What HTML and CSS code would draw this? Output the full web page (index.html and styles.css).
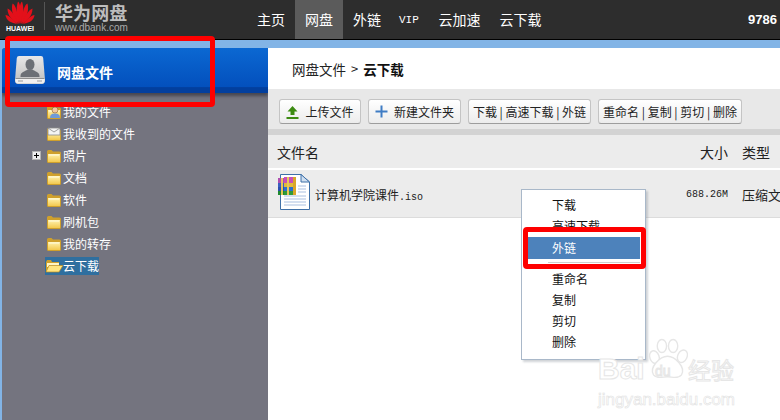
FILE: index.html
```html
<!DOCTYPE html>
<html lang="zh-CN">
<head>
<meta charset="utf-8">
<title>华为网盘</title>
<link rel="stylesheet" href="styles.css">
</head>
<body>
<svg class="defs" width="0" height="0">
  <defs>
    <linearGradient id="fg" x1="0" y1="0" x2="0" y2="1">
      <stop offset="0" stop-color="#fff3b0"/>
      <stop offset="1" stop-color="#f3c94e"/>
    </linearGradient>
    <g id="fld">
      <path d="M1 2.500Q1 1 2.500 1H5.500L7 2.500H13.500Q15 2.500 15 4V12.500Q15 14 13.500 14H2.500Q1 14 1 12.500Z" fill="#cfa02c"/>
      <path d="M2 5H14V13H2Z" fill="url(#fg)"/>
      <path d="M3 6H13" stroke="#fffbe0"/>
    </g>
  </defs>
</svg>
<div class="page">
  <header class="top">
    <div class="logo">
      <svg class="flower" width="30" height="23" viewBox="0 0 30 23">
        <g fill="#e3101a">
          <path d="M14.500 23C11 16 11 6 13 0.500C15.500 2 16.500 11 14.500 23Z"/>
          <path d="M15.500 23C19 16 19 6 17 0.500C14.500 2 13.500 11 15.500 23Z"/>
          <path d="M14 23C9 18 5.500 10 7.500 2.500C10.500 3.500 13 12 14 23Z"/>
          <path d="M16 23C21 18 24.500 10 22.500 2.500C19.500 3.500 17 12 16 23Z"/>
          <path d="M13 23C8 20 2.500 15 2.500 7.500C6 8.500 11 16 13 23Z"/>
          <path d="M17 23C22 20 27.500 15 27.500 7.500C24 8.500 19 16 17 23Z"/>
          <path d="M12 23C7 22 1 20 0.500 14C4 14.500 9 19 12 23Z"/>
          <path d="M18 23C23 22 29 20 29.500 14C26 14.500 21 19 18 23Z"/>
        </g>
      </svg>
      <span class="logo-word">HUAWEI</span>
    </div>
    <div class="logo-sep"></div>
    <div class="brand">
      <div class="brand-cn">华为网盘</div>
      <div class="brand-en">www.dbank.com</div>
    </div>
    <nav class="nav">
      <a class="nav-item">主页</a>
      <a class="nav-item is-active">网盘</a>
      <a class="nav-item">外链</a>
      <a class="nav-item nav-vip">VIP</a>
      <a class="nav-item nav-wide">云加速</a>
      <a class="nav-item nav-wide">云下载</a>
    </nav>
    <div class="user">9786</div>
  </header>

  <div class="app">
    <aside class="side">
      <div class="side-head">
        <svg class="disk" width="32" height="30" viewBox="0 0 32 30">
          <defs>
            <linearGradient id="disk" x1="0" y1="0" x2="0" y2="1">
              <stop offset="0" stop-color="#e8e8e8"/>
              <stop offset="1" stop-color="#bcbcbc"/>
            </linearGradient>
          </defs>
          <path d="M5 1H27Q29 1 29.200 3L31 25Q31 29 28 29H4Q1 29 1 25L2.800 3Q3 1 5 1Z" fill="url(#disk)"/>
          <path d="M1.300 23.500H30.700V25.500Q30.700 28.500 28 28.500H4Q1.300 28.500 1.300 25.500Z" fill="#f0f0f0"/>
          <path d="M1.500 23.500H30.500" stroke="#8f8f8f"/>
          <ellipse cx="16" cy="9.500" rx="4.500" ry="5.500" fill="#6c7076"/>
          <path d="M6.500 21C6.500 17 11 16.500 13.500 14.500H18.500C21 16.500 25.500 17 25.500 21V22H6.500Z" fill="#6c7076"/>
          <path d="M4 26H9M23 26H28" stroke="#9a9a9a"/>
        </svg>
        <span class="side-title">网盘文件</span>
      </div>
      <ul class="tree">
        <li class="tree-row">
          <svg class="folder" width="16" height="15" viewBox="0 0 16 15">
            <use href="#fld"/>
            <circle cx="9" cy="5" r="3" fill="#f2c9a0" stroke="#8a5a2a" stroke-width=".6"/>
            <path d="M4 13C4 9 7 8.500 9 8.500C11 8.500 14 9 14 13Z" fill="#6f9ad8"/>
          </svg>
          <span>我的文件</span>
        </li>
        <li class="tree-row">
          <svg class="folder" width="16" height="15" viewBox="0 0 16 15">
            <use href="#fld"/>
            <path d="M2 1H14V8H2Z" fill="#f4f4f4" stroke="#8c8c8c" stroke-width=".8"/>
            <path d="M2 1L8 5L14 1" fill="none" stroke="#8c8c8c" stroke-width=".8"/>
          </svg>
          <span>我收到的文件</span>
        </li>
        <li class="tree-row">
          <svg class="plus" width="9" height="9" viewBox="0 0 9 9">
            <rect x="0.500" y="0.500" width="8" height="8" fill="#eeeeee" stroke="#b4b4b4"/>
            <path d="M2 4.500H7M4.500 2V7" stroke="#000"/>
          </svg>
          <svg class="folder" width="16" height="15" viewBox="0 0 16 15"><use href="#fld"/></svg>
          <span>照片</span>
        </li>
        <li class="tree-row">
          <svg class="folder" width="16" height="15" viewBox="0 0 16 15"><use href="#fld"/></svg>
          <span>文档</span>
        </li>
        <li class="tree-row">
          <svg class="folder" width="16" height="15" viewBox="0 0 16 15"><use href="#fld"/></svg>
          <span>软件</span>
        </li>
        <li class="tree-row">
          <svg class="folder" width="16" height="15" viewBox="0 0 16 15"><use href="#fld"/></svg>
          <span>刷机包</span>
        </li>
        <li class="tree-row">
          <svg class="folder" width="16" height="15" viewBox="0 0 16 15"><use href="#fld"/></svg>
          <span>我的转存</span>
        </li>
        <li class="tree-row is-open">
          <span class="selected">
            <svg class="folder-open" width="18" height="14" viewBox="0 0 18 14"><path d="M1 3V13H14V3H7L6 1H2Z" fill="#cfa02c"/><path d="M2 4H14V8H2Z" fill="#fff6c4"/><path d="M1 13L4 6.500H18L14 13Z" fill="#ffe680" stroke="#b98a1c" stroke-width=".7"/></svg>
            <span>云下载</span>
          </span>
        </li>
      </ul>
    </aside>

    <main class="main">
      <div class="crumb"><span>网盘文件</span><span class="crumb-sep">&gt;</span><strong>云下载</strong></div>
      <div class="toolbar">
        <button class="btn btn-upload">
          <svg width="13" height="14" viewBox="0 0 13 14"><path d="M6.500 1L11.500 6.500H8.500V10H4.500V6.500H1.500Z" fill="#3d8b12"/><path d="M0.500 12H12.500V14H0.500Z" fill="#3d8b12"/></svg>
          上传文件
        </button>
        <button class="btn btn-new">
          <svg width="13" height="13" viewBox="0 0 13 13"><path d="M5.500 0.500H7.500V5.500H12.500V7.500H7.500V12.500H5.500V7.500H0.500V5.500H5.500Z" fill="#3f7cc4"/></svg>
          新建文件夹
        </button>
        <button class="btn btn-text">下载 | 高速下载 | 外链</button>
        <button class="btn btn-text">重命名 | 复制 | 剪切 | 删除</button>
      </div>
      <div class="band"></div>
      <div class="thead">
        <span class="col-name col-head">文件名</span>
        <span class="col-size col-head">大小</span>
        <span class="col-type col-head">类型</span>
      </div>
      <div class="trow">
        <svg class="rar" width="33" height="36" viewBox="0 0 33 36">
          <path d="M2.500 0.500H23L31.500 8V35.500H2.500Z" fill="#fff" stroke="#3f70a8"/>
          <path d="M23 0.500V8H31.500Z" fill="#cfdff0" stroke="#3f70a8"/>
          <path d="M20 12H28M20 15H28M20 18H28M6 22H28M6 25H28M6 28H28M6 31H28" stroke="#a9bfe0"/>
          <rect x="0" y="4" width="6" height="5" fill="#b04fb0"/>
          <rect x="6" y="3" width="9" height="6" fill="#c94fb8"/>
          <rect x="0" y="9" width="6" height="4" fill="#3a5fc0"/>
          <rect x="6" y="9" width="9" height="4" fill="#e2b93c"/>
          <rect x="0" y="13" width="6" height="4" fill="#2a50b0"/>
          <rect x="6" y="13" width="9" height="4" fill="#2a70d0"/>
          <rect x="0" y="17" width="6" height="4" fill="#1f8a30"/>
          <rect x="6" y="17" width="9" height="4" fill="#2f9a3a"/>
          <rect x="15" y="3" width="3" height="18" fill="#d9a62a"/>
          <rect x="3" y="4" width="2" height="17" fill="#e8c65a"/>
          <rect x="9" y="3" width="2" height="18" fill="#e8c65a"/>
        </svg>
        <span class="col-name file-name">计算机学院课件<span class="ext">.iso</span></span>
        <span class="col-size file-size">688.26M</span>
        <span class="col-type file-type">压缩文件</span>
      </div>
    </main>
  </div>

  <div class="menu">
    <div class="menu-item">下载</div>
    <div class="menu-item">高速下载</div>
    <div class="menu-item is-hover">外链</div>
    <div class="menu-sep"></div>
    <div class="menu-item">重命名</div>
    <div class="menu-item">复制</div>
    <div class="menu-item">剪切</div>
    <div class="menu-item">删除</div>
  </div>

  <div class="mark mark-side"></div>
  <div class="mark mark-menu"></div>

  <div class="wm">
    <svg class="wm-paw" width="41" height="44" viewBox="0 0 44 44" fill="#fff" stroke="#e6e6e6" stroke-width="1.500">
      <ellipse cx="8" cy="20" rx="5" ry="7" transform="rotate(-20 8 20)"/>
      <ellipse cx="16" cy="8" rx="5" ry="7"/>
      <ellipse cx="28" cy="8" rx="5" ry="7"/>
      <ellipse cx="38" cy="19" rx="5" ry="7" transform="rotate(25 38 19)"/>
      <path d="M22 19C30 19 42 31 37 39C33 44 27 41 22 41C17 41 11 44 7 39C2 31 14 19 22 19Z"/>
    </svg>
    <span class="wm-bai">Bai</span>
    <span class="wm-du">du</span>
    <span class="wm-cn">经验</span>
    <span class="wm-url">jingyan.baidu.com</span>
  </div>
</div>
</body>
</html>
```

FILE: styles.css
```css
* { box-sizing: border-box; }
html, body { margin: 0; padding: 0; }
body {
  width: 780px;
  height: 420px;
  overflow: hidden;
  font-family: "Noto Sans CJK SC", "Liberation Sans", sans-serif;
  font-size: 12px;
  color: #111;
  background: #fff;
}
.defs { position: absolute; }
.page {
  position: relative;
  width: 780px;
  height: 420px;
  overflow: hidden;
  background: #82b4e6;
  display: flex;
  flex-direction: column;
}

/* top bar */
.top {
  height: 40px;
  flex: none;
  display: flex;
  align-items: stretch;
  background: #2d2d2d;
  border-bottom: 1px solid #000;
  color: #fff;
}
.logo {
  width: 40px;
  padding: 1px 0 0 5px;
  display: flex;
  flex-direction: column;
  flex: none;
}
.flower { display: block; }
.logo-word {
  font: bold 7px/8px "Liberation Sans", sans-serif;
  color: #fff;
  width: 30px;
  text-align: center;
  margin-top: 1px;
}
.logo-sep {
  width: 1px;
  height: 28px;
  margin: 2px 10px 0 4px;
  background: #555;
  flex: none;
}
.brand {
  width: 192px;
  flex: none;
  padding-top: 2px;
  color: #bdbdbd;
}
.brand-cn {
  font-weight: 700;
  font-size: 18px;
  line-height: 20px;
  letter-spacing: .1px;
}
.brand-en {
  font: 10px/11px "Liberation Sans", sans-serif;
  color: #aaa;
}
.nav { display: flex; flex: none; }
.nav-item {
  padding: 0 10px;
  font-size: 14px;
  line-height: 39px;
  color: #fff;
}
.nav-item.is-active { background: #5b5b5b; }
.nav-vip {
  font: 11px/41px "Liberation Mono", monospace;
  padding: 0 8px;
  width: 38px;
}
.nav-wide { padding: 0 9.500px; }
.user {
  margin-left: auto;
  width: 32px;
  font: bold 13px/39px "Liberation Sans", sans-serif;
  color: #fff;
  overflow: hidden;
}

/* app */
.app {
  flex: 1;
  display: flex;
  padding: 8px 0 0 2px;
  min-height: 0;
}
.side {
  width: 266px;
  flex: none;
  background: #74747f;
  border-radius: 3px 0 0 0;
  overflow: hidden;
}
.side-head {
  height: 45px;
  display: flex;
  align-items: center;
  padding: 0 0 2px 12px;
  background: linear-gradient(#0b68d2, #0350bd 86%, #023f9e 88%, #023f9e);
  box-shadow: 0 3px 3px rgba(40, 40, 50, .6);
  color: #fff;
}
.disk { flex: none; }
.side-title {
  margin: 5px 0 0 11px;
  font-weight: 700;
  font-size: 14px;
}
.tree {
  list-style: none;
  margin: 0;
  padding: 8px 0 0 44px;
}
.tree-row {
  position: relative;
  height: 22px;
  display: flex;
  align-items: center;
  color: #fff;
  font-size: 12px;
  line-height: 22px;
}
.folder { flex: none; margin-right: 1px; }
.folder-open { flex: none; }
.plus {
  position: absolute;
  left: -14px;
  top: 6px;
}
.selected {
  display: flex;
  align-items: center;
  height: 18px;
  width: 54px;
  margin-left: -1px;
  background: #2f6f9f;
  white-space: nowrap;
}

/* main */
.main {
  flex: 1;
  min-width: 0;
  background: #fff;
  display: flex;
  flex-direction: column;
}
.crumb {
  height: 41px;
  padding-left: 24px;
  display: flex;
  align-items: center;
  font-size: 13.500px;
  color: #222;
}
.crumb-sep { margin: 0 5px; font-size: 13px; }
.crumb strong { font-weight: 700; color: #111; }
.toolbar {
  height: 40px;
  padding: 10px 0 0 11px;
  display: flex;
  gap: 7px;
  background: #e8e8e8;
}
.btn {
  height: 25px;
  padding: 0;
  display: flex;
  align-items: center;
  justify-content: center;
  gap: 6px;
  font: 12px "Noto Sans CJK SC", sans-serif;
  color: #222;
  background: linear-gradient(#fff, #ececec);
  border: 1px solid #c4c4c4;
  border-bottom-color: #9d9d9d;
  border-radius: 3px;
  white-space: nowrap;
}
.btn-upload { width: 82px; }
.btn-new { width: 93px; }
.btn-text:nth-child(3) { width: 123px; }
.btn-text:nth-child(4) { width: 144px; }
.band { height: 6px; background: #d3d3d3; flex: none; }
.thead {
  height: 33px;
  flex: none;
  display: flex;
  align-items: center;
  padding-left: 9px;
  background: #ececec;
}
.trow {
  height: 48px;
  flex: none;
  margin-top: 2px;
  display: flex;
  align-items: center;
  padding-left: 8px;
  background: #ececec;
  border-bottom: 1px solid #dcdcdc;
}
.col-name { flex: 1; white-space: nowrap; }
.col-size { width: 52px; flex: none; padding-right: 14px; text-align: right; white-space: nowrap; }
.col-type { width: 38px; flex: none; white-space: nowrap; }
.col-head { font-size: 14px; color: #222; }
.rar { flex: none; margin: -4px 4px 0 2px; }
.file-name { font-size: 12px; margin-top: 2px; color: #222; }
.ext, .file-size { font-family: "Liberation Mono", monospace; font-size: 10px; }
.file-size { width: 56px; margin-top: 2px; color: #222; }
.file-type { margin-top: 2px; font-size: 13px; color: #222; }

/* context menu */
.menu {
  position: absolute;
  left: 521px;
  top: 189px;
  width: 125px;
  height: 171px;
  padding: 4px 5px 0;
  background: #fff;
  border: 1px solid #a9b8c9;
  box-shadow: 2px 2px 2px rgba(120, 130, 140, .35);
}
.menu-item {
  height: 21px;
  padding-left: 25px;
  font-size: 12px;
  line-height: 21px;
  color: #111;
}
.menu-item.is-hover {
  height: 22px;
  line-height: 22px;
  background: #4d82bb;
  color: #fff;
  margin-top: 1px;
}
.menu-sep {
  height: 1px;
  margin: 3px 0 5px 21px;
  background: #cfcfcf;
}

/* annotation boxes */
.mark {
  position: absolute;
  border: 5px solid #fe0000;
  border-radius: 4px;
}
.mark-side { left: 5px; top: 36px; width: 210px; height: 71px; }
.mark-menu { left: 523px; top: 227px; width: 123px; height: 42px; }

/* watermark */
.wm {
  position: absolute;
  left: 598px;
  top: 335px;
  width: 142px;
  height: 70px;
}
.wm-paw { position: absolute; left: 49px; top: 2px; }
.wm-bai, .wm-du, .wm-cn, .wm-url {
  position: absolute;
  color: #fff;
  -webkit-text-stroke: 1px #e6e6e6;
  font-family: "Liberation Sans", sans-serif;
}
.wm-bai { left: 0; top: 16px; font-size: 30px; font-weight: 700; line-height: 36px; }
.wm-du { left: 57px; top: 27px; font-size: 14px; line-height: 18px; }
.wm-cn { left: 90px; top: 19px; font-size: 23px; line-height: 30px; font-family: "Noto Sans CJK SC", sans-serif; }
.wm-url { left: 0; top: 55px; font-size: 17px; line-height: 20px; -webkit-text-stroke: .6px #e2e2e2; }
```
